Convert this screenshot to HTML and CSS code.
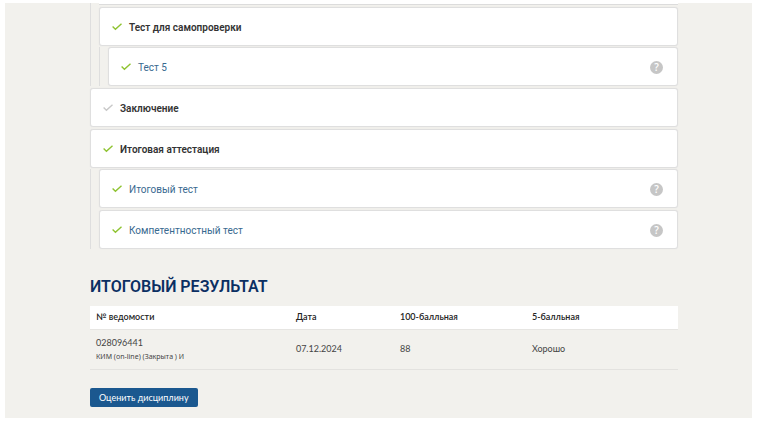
FILE: index.html
```html
<!DOCTYPE html>
<html lang="ru">
<head>
<meta charset="utf-8">
<title>Итоговый результат</title>
<link rel="stylesheet" href="styles.css">
</head>
<body>
<svg class="sprite" aria-hidden="true">
  <symbol id="check" viewBox="0 0 10 8"><path d="M.6 3.6 3.4 6.2 9.5.7" fill="none" stroke="currentColor" stroke-width="1.4"/></symbol>
</svg>
<main class="page">
  <div class="content">
    <section class="tree">
      <div class="group group-first">
        <div class="card-edge"></div>
        <div class="card"><svg class="check"><use href="#check"/></svg><span class="title">Тест для самопроверки</span></div>
        <div class="group">
          <div class="card"><svg class="check"><use href="#check"/></svg><a class="link" href="#">Тест 5</a><button class="help" type="button">?</button></div>
        </div>
      </div>
      <div class="card"><svg class="check check-off"><use href="#check"/></svg><span class="title">Заключение</span></div>
      <div class="card"><svg class="check"><use href="#check"/></svg><span class="title">Итоговая аттестация</span></div>
      <div class="group">
        <div class="card"><svg class="check"><use href="#check"/></svg><a class="link" href="#">Итоговый тест</a><button class="help" type="button">?</button></div>
        <div class="card"><svg class="check"><use href="#check"/></svg><a class="link" href="#">Компетентностный тест</a><button class="help" type="button">?</button></div>
      </div>
    </section>
    <h2 class="heading">ИТОГОВЫЙ РЕЗУЛЬТАТ</h2>
    <table class="results">
      <thead>
        <tr><th class="col-sheet">№ ведомости</th><th class="col-date">Дата</th><th class="col-hundred">100-балльная</th><th>5-балльная</th></tr>
      </thead>
      <tbody>
        <tr><td>028096441<small class="note">КИМ (on-line) (Закрыта ) И</small></td><td>07.12.2024</td><td>88</td><td>Хорошо</td></tr>
      </tbody>
    </table>
    <button class="rate" type="button">Оценить дисциплину</button>
  </div>
</main>
</body>
</html>
```
FILE: styles.css
```css
* {
  box-sizing: border-box;
}

body {
  margin: 0;
  padding: 3px 8px 13px 5px;
  background: #fff;
  color: #444;
  font-family: Lato, "Open Sans", sans-serif;
  font-size: 9px;
}

.sprite {
  display: none;
}

.page {
  padding: 0 74px 11px 85px;
  background: #f2f1ed;
}

.tree,
.group {
  display: flex;
  flex-direction: column;
  gap: 2px;
}

.group {
  margin-top: -1px;
  padding-left: 8px;
  border-left: 1px solid #dedede;
}

.group-first {
  margin-top: 0;
}

.card {
  display: flex;
  align-items: center;
  height: 39px;
  padding: 1px 14px 0 12px;
  background: #fff;
  border: 1px solid #dfdfdf;
  border-radius: 3px;
  box-shadow: 0 0 1px #ddd;
}

.card-edge {
  height: 2px;
  background: #fff;
  border-bottom: 1px solid #dcdcdc;
}

.check {
  width: 10px;
  height: 8px;
  margin-right: 7px;
  color: #8fc331;
}

.check-off {
  color: #c8c8c8;
}

.title,
.link {
  font-family: Roboto, sans-serif;
  font-size: 10px;
  line-height: 17px;
}

.title {
  color: #333;
  font-weight: 600;
}

.link {
  color: #38698f;
  text-decoration: none;
}

.help {
  width: 13px;
  height: 13px;
  margin-left: auto;
  padding: 0;
  border: 0;
  border-radius: 50%;
  background: #c6c6c6;
  color: #fff;
  font: 600 10px/13px "Open Sans", sans-serif;
}

.heading {
  margin: 26px 0 8px;
  color: #0b2f62;
  font: 600 16px/23px Roboto, sans-serif;
}

.results {
  width: 100%;
  border-collapse: collapse;
  table-layout: fixed;
  line-height: 14px;
}

.results th {
  height: 23px;
  padding: 0 6px;
  background: #fff;
  border-bottom: 1px solid #e6e5e2;
  color: #222;
  font-weight: 600;
  text-align: left;
}

.results td {
  height: 40px;
  padding: 0 6px;
  border-bottom: 1px solid #e3e2df;
}

.col-sheet {
  width: 34%;
}

.col-date {
  width: 104px;
}

.col-hundred {
  width: 132px;
}

.note {
  display: block;
  font: 7px/13px "Noto Sans", sans-serif;
}

.rate {
  height: 19px;
  margin-top: 18px;
  padding: 0 9px;
  border: 0;
  border-radius: 2px;
  background: #1b588f;
  color: #fff;
  font: inherit;
  line-height: 19px;
}
```
